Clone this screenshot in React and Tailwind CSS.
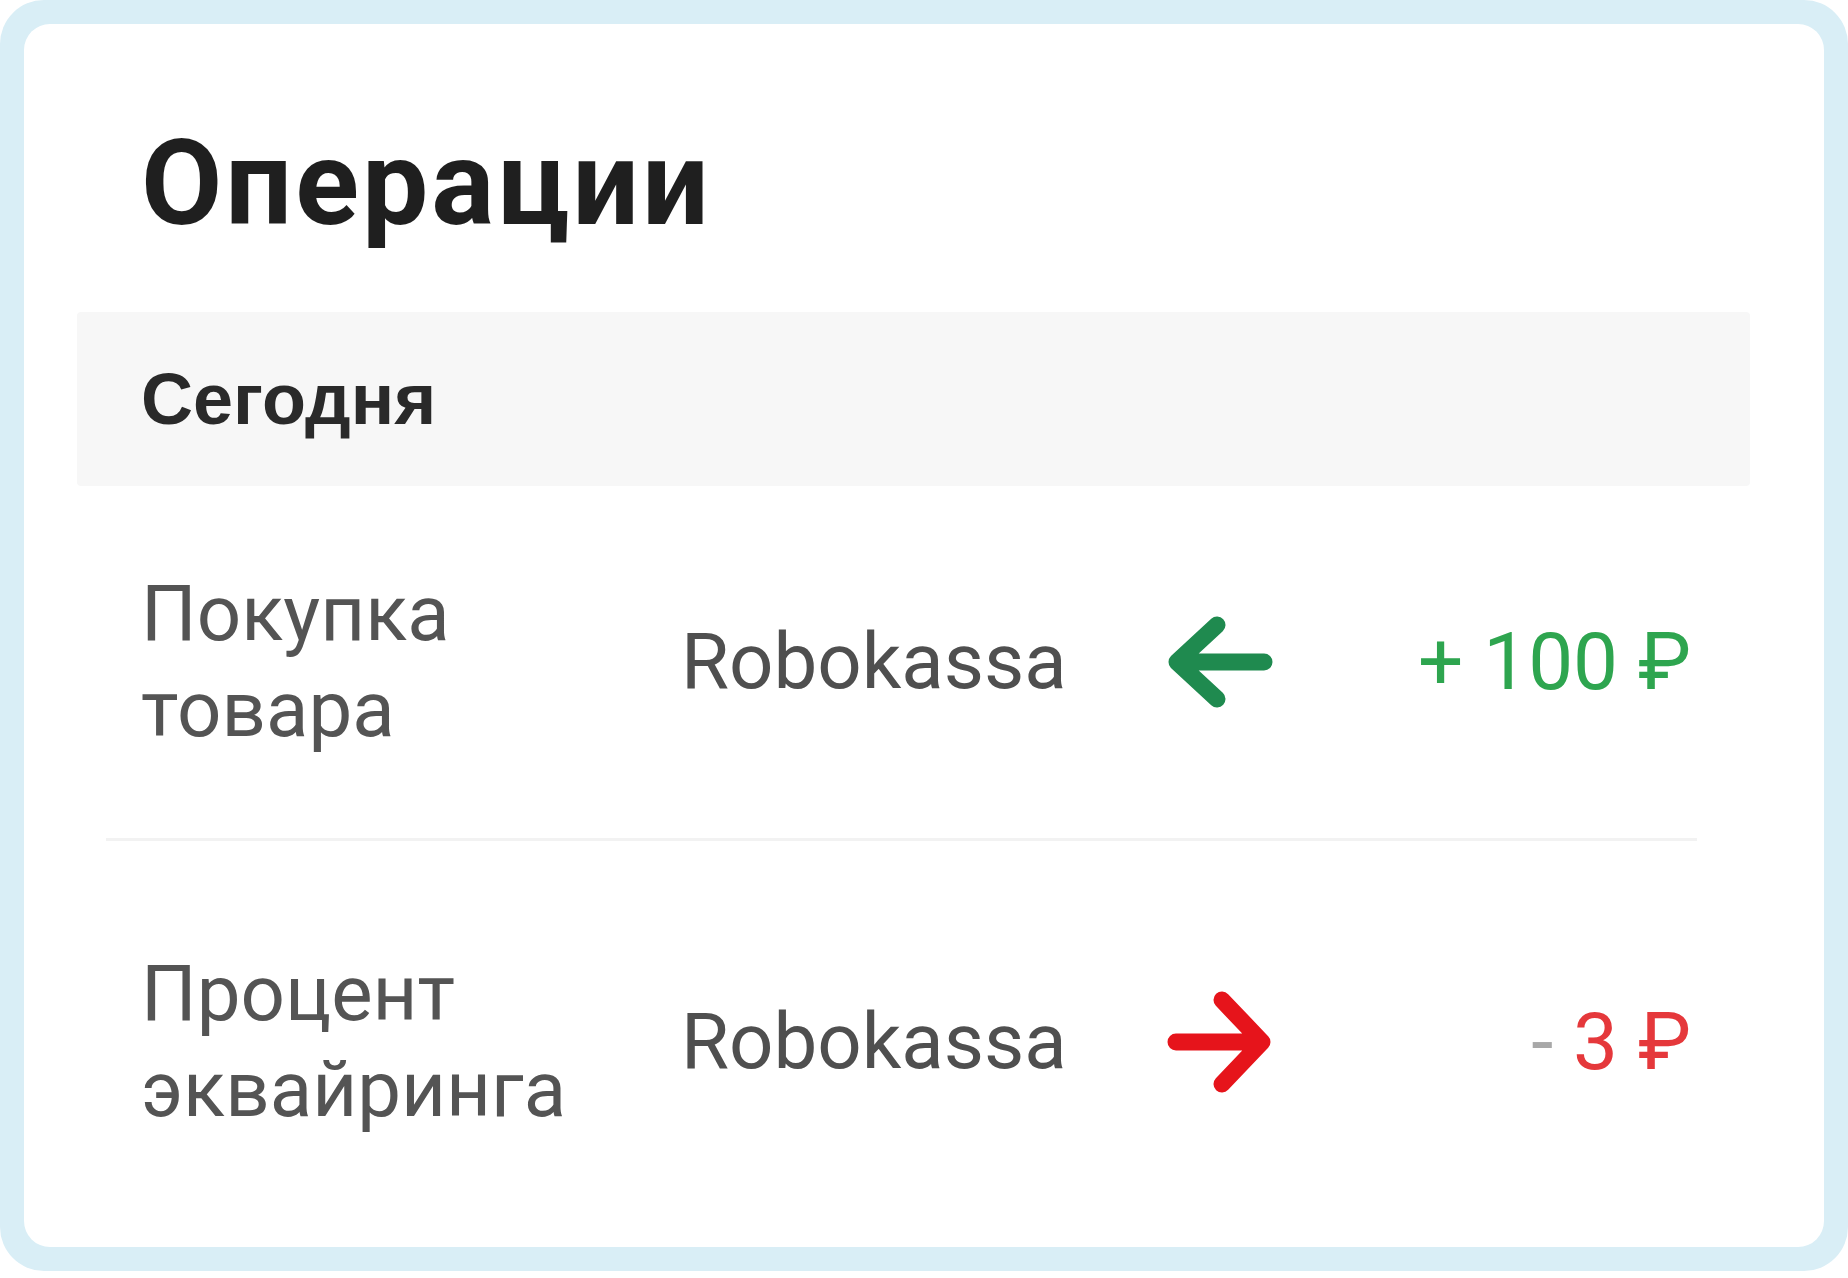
import React from 'react';

const operations = [
    {
        title: ['Покупка', 'товара'],
        merchant: 'Robokassa',
        direction: 'in',
        sign: '+',
        amount: '100 ₽',
        height: 'h-[355px]',
    },
    {
        title: ['Процент', 'эквайринга'],
        merchant: 'Robokassa',
        direction: 'out',
        sign: '-',
        amount: '3 ₽',
        height: 'h-[402px]',
    },
];

// Arrow drawn as a thick chevron + shaft, pointing left (incoming) or right (outgoing)
const Arrow = ({ direction }) => {
    if (direction === 'in') {
        return (
            <svg width="106" height="92" viewBox="0 0 106 92" fill="none">
                <path
                    d="M97 46 H10 M50 9 L10 46 L50 83"
                    stroke="#1f8a4f"
                    strokeWidth="17"
                    strokeLinecap="round"
                    strokeLinejoin="round"
                />
            </svg>
        );
    }
    return (
        <svg width="106" height="104" viewBox="0 0 106 104" fill="none">
            <path
                d="M9 52 H95 M55 10 L95 52 L55 94"
                stroke="#e6141b"
                strokeWidth="17"
                strokeLinecap="round"
                strokeLinejoin="round"
            />
        </svg>
    );
};

const OperationRow = ({ op, last }) => (
    <div
        className={`grid grid-cols-[540px_486px_106px_1fr] items-center pl-[35px] pr-[6px] ${op.height} ${
            last ? '' : 'border-b-[3px] border-[#f2f2f2]'
        }`}
    >
        <div className="text-[78px] leading-[96px] text-[#545454]">
            {op.title[0]}
            <br />
            {op.title[1]}
        </div>
        <div className="text-[78px] leading-none text-[#4f4f4f]">{op.merchant}</div>
        <div className="flex items-center">
            <Arrow direction={op.direction} />
        </div>
        <div
            className={`text-right text-[80px] leading-none ${
                op.direction === 'in' ? 'text-[#2ea54f]' : 'text-[#e5383b]'
            }`}
        >
            <span className={op.direction === 'in' ? '' : 'text-[#a8a8a8]'}>{op.sign}</span> {op.amount}
        </div>
    </div>
);

const App = () => {
    return (
        <div className="min-h-screen bg-white font-['Roboto','Liberation_Sans',sans-serif]">
            <div className="h-[1271px] rounded-[44px] bg-[#d9eef6] p-6">
                <div className="flex h-[1223px] flex-col rounded-[26px] bg-white pt-[101px]">
                    <h1 className="ml-[117px] text-[118px] font-bold leading-none tracking-[3px] text-[#1f1f1f]">
                        Операции
                    </h1>

                    <div className="ml-[53px] mr-[74px] mt-[69px] flex h-[174px] items-center rounded-sm bg-[#f7f7f7] pl-[64px]">
                        <span className="font-['Liberation_Sans',sans-serif] text-[72px] font-bold leading-none text-[#2a2a2a]">
                            Сегодня
                        </span>
                    </div>

                    <div className="ml-[82px] w-[1591px]">
                        {operations.map((op, i) => (
                            <OperationRow key={i} op={op} last={i === operations.length - 1} />
                        ))}
                    </div>
                </div>
            </div>
        </div>
    );
};

export default App;
